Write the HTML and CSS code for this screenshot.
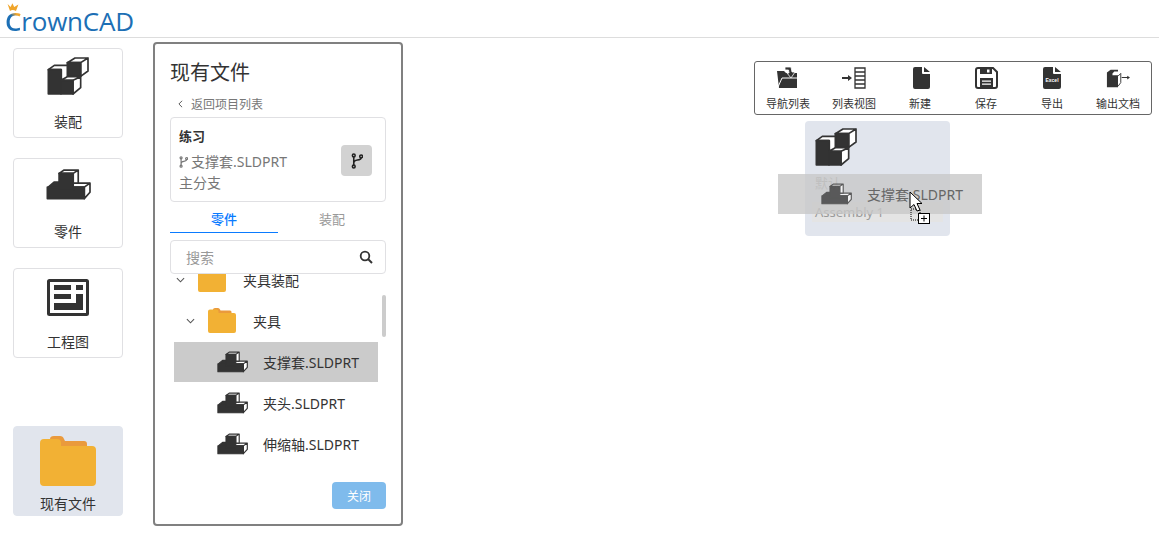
FILE: index.html
```html
<!DOCTYPE html>
<html lang="en">
<head>
  <meta charset="UTF-8">
  <meta name="viewport" content="width=device-width, initial-scale=1.0">
  <title>CrownCAD</title>
  <link rel="stylesheet" href="styles.css">
</head>

<body>
  <!-- shared icons -->
  <svg class="icon-defs" aria-hidden="true">
    <symbol id="icon-assembly" viewBox="144 170 126 114">
      <g stroke="#333" stroke-width="5" stroke-linejoin="round">
        <path fill="#fff" d="M205 187 228 173H267L245 187Z M245 187 267 173V212L245 228Z"/>
        <path fill="#333" d="M205 187H245V228H205Z"/>
        <path fill="#fff" d="M148 208 166 195H205V238H187V208Z"/>
        <path fill="#333" d="M148 208H186V281H148Z"/>
        <path fill="#fff" d="M186 240 205 229H245L222 240Z M222 240 245 229V262L222 281Z"/>
        <path fill="#333" d="M186 240H222V281H186Z"/>
      </g>
    </symbol>
    <symbol id="icon-part" viewBox="136 62 134 92">
      <g stroke="#333" stroke-width="5" stroke-linejoin="round">
        <path fill="#fff" d="M213 104H267L250 116H213Z M250 116 267 104V131L250 150Z"/>
        <path fill="#333" d="M140 118 160 101H180V118Z M140 116H250V150H140Z"/>
        <path fill="#fff" d="M175 75 190 65H232L217 75Z M217 75 232 65V104H217Z"/>
        <path fill="#333" d="M175 75H217V125H175Z"/>
      </g>
    </symbol>
    <symbol id="icon-drawing" viewBox="0 0 42 37">
      <rect x="1.500" y="1.500" width="39" height="34" rx="1" fill="#fff" stroke="#333" stroke-width="3"/>
      <path fill="#333" d="M7 6H24V11H7Z M29 6H36V11H29Z M7 15H24V20H7Z M29 15H36V31H7V24H29Z"/>
    </symbol>
    <symbol id="icon-folder" viewBox="0 0 56 50">
      <path fill="#ea9a3c" d="M10 3Q10 0 14 0H20Q23 0 24 3L25 5H44Q47 5 47 8V12H10Z"/>
      <path fill="#f2b134" d="M0 7Q0 3 4 3H17Q21 3 21 7V10H52Q56 10 56 14V46Q56 50 52 50H4Q0 50 0 46Z"/>
    </symbol>
    <symbol id="icon-branch" viewBox="0 0 13 17">
      <g fill="none" stroke="currentColor" stroke-width="1.700">
        <circle cx="3" cy="2.500" r="1.500"/>
        <circle cx="3" cy="14.500" r="1.500"/>
        <circle cx="11" cy="3.500" r="1.500"/>
        <path d="M3 4V13 M3 11Q3 8 7 7.500T11 5"/>
      </g>
    </symbol>
    <symbol id="icon-chevron" viewBox="0 0 10 6">
      <path d="M1 1 5 5 9 1" fill="none" stroke="#555" stroke-width="1.200"/>
    </symbol>
  </svg>

  <header class="topbar">
    <div class="logo">
      <svg class="logo-crown" viewBox="0 0 20 14">
        <path fill="#f0a52b" d="M1 1 6 6 9 0 12 6 19 2 15 13Q9 9 5 13Z"/>
      </svg>
      <span class="logo-c">C</span>rownCAD
    </div>
  </header>

  <main class="main">
    <aside class="sidebar">
      <button class="side-card">
        <svg class="side-icon-assembly"><use href="#icon-assembly"/></svg>
        <span>装配</span>
      </button>
      <button class="side-card">
        <svg class="side-icon-part"><use href="#icon-part"/></svg>
        <span>零件</span>
      </button>
      <button class="side-card">
        <svg class="side-icon-drawing"><use href="#icon-drawing"/></svg>
        <span>工程图</span>
      </button>
      <button class="side-card side-card-active">
        <svg class="side-icon-folder"><use href="#icon-folder"/></svg>
        <span>现有文件</span>
      </button>
    </aside>

    <section class="panel">
      <h2 class="panel-title">现有文件</h2>
      <a class="back-link">
        <svg class="back-chevron" viewBox="0 0 6 10"><path d="M5 1 1 5 5 9" fill="none" stroke="#555" stroke-width="1.200"/></svg>
        返回项目列表
      </a>

      <div class="project-card">
        <div class="project-info">
          <strong>练习</strong>
          <div class="project-file">
            <svg class="project-branch"><use href="#icon-branch"/></svg>
            支撑套.SLDPRT
          </div>
          <div>主分支</div>
        </div>
        <button class="branch-btn"><svg><use href="#icon-branch"/></svg></button>
      </div>

      <div class="tabs">
        <div class="tab tab-active">零件</div>
        <div class="tab">装配</div>
      </div>

      <div class="search">
        <span>搜索</span>
        <svg class="search-icon" viewBox="0 0 14 14">
          <circle cx="6" cy="6" r="4.300" fill="none" stroke="#333" stroke-width="1.800"/>
          <path d="M9 9 13 13" stroke="#333" stroke-width="2"/>
        </svg>
      </div>

      <div class="tree">
        <div class="tree-scroll">
          <div class="tree-row depth-0">
            <svg class="tree-chevron"><use href="#icon-chevron"/></svg>
            <svg class="tree-folder"><use href="#icon-folder"/></svg>
            <span>夹具装配</span>
          </div>
          <div class="tree-row depth-1">
            <svg class="tree-chevron"><use href="#icon-chevron"/></svg>
            <svg class="tree-folder"><use href="#icon-folder"/></svg>
            <span>夹具</span>
          </div>
          <div class="tree-row depth-2 tree-row-selected">
            <svg class="tree-part"><use href="#icon-part"/></svg>
            <span>支撑套.SLDPRT</span>
          </div>
          <div class="tree-row depth-2">
            <svg class="tree-part"><use href="#icon-part"/></svg>
            <span>夹头.SLDPRT</span>
          </div>
          <div class="tree-row depth-2">
            <svg class="tree-part"><use href="#icon-part"/></svg>
            <span>伸缩轴.SLDPRT</span>
          </div>
        </div>
        <div class="scrollbar"></div>
      </div>

      <div class="panel-footer">
        <button class="close-btn">关闭</button>
      </div>
    </section>

    <section class="workspace">
      <nav class="toolbar">
        <div class="tool">
          <svg viewBox="0 0 24 22">
            <path fill="#333" d="M1 4H8L10 6H21V21H3Z"/>
            <path fill="none" stroke="#fff" d="M2 20 6 11H23"/>
            <path fill="#333" stroke="#fff" stroke-width="0.800" d="M9 0H15L16 5H19L15 11 11 6H13L12.500 3H9Z"/>
          </svg>
          <span>导航列表</span>
        </div>
        <div class="tool">
          <svg viewBox="0 0 24 22">
            <path fill="#333" d="M0 10H6V8L10 11 6 14V12H0Z"/>
            <path fill="none" stroke="#333" stroke-width="1.300" d="M13 1H23V21H13Z M13 5H23 M13 9H23 M13 13H23 M13 17H23"/>
          </svg>
          <span>列表视图</span>
        </div>
        <div class="tool">
          <svg viewBox="0 0 24 22">
            <path fill="#333" d="M5 2Q5 0 7 0H14L14 6Q14 7 15 7H22V20Q22 22 20 22H7Q5 22 5 20Z M16 0 22 5H16Z"/>
          </svg>
          <span>新建</span>
        </div>
        <div class="tool">
          <svg viewBox="0 0 24 22">
            <path fill="none" stroke="#333" stroke-width="2" d="M4 1H19L23 5V19Q23 21 21 21H4Q2 21 2 19V3Q2 1 4 1Z"/>
            <path fill="#333" d="M6 1H18V7H6Z"/>
            <path fill="#fff" d="M13 2.500H15.500V5.500H13Z"/>
            <path fill="#333" d="M6 11H19V21H6Z"/>
            <path fill="#fff" d="M8 13.500H17V14.700H8Z M8 16.500H17V17.700H8Z"/>
          </svg>
          <span>保存</span>
        </div>
        <div class="tool">
          <svg viewBox="0 0 24 22">
            <path fill="#333" d="M3 2Q3 0 5 0H13L13 6Q13 7 14 7H21V20Q21 22 19 22H5Q3 22 3 20Z M15 0 21 5H15Z"/>
            <text class="excel-text" x="12" y="15" text-anchor="middle">Excel</text>
          </svg>
          <span>导出</span>
        </div>
        <div class="tool">
          <svg viewBox="0 0 26 22">
            <path fill="#333" d="M1 5 5 2H13L13 4H9L7 6V21H1Z M7 8H13V21H7Z"/>
            <path fill="none" stroke="#333" d="M13 9 16 6V16L13 20"/>
            <path fill="#333" d="M17 10H23V8.500L26 10.500 23 12.500V11H17Z"/>
          </svg>
          <span>输出文档</span>
        </div>
      </nav>

      <div class="asm-card">
        <svg class="asm-icon"><use href="#icon-assembly"/></svg>
        <div class="asm-name">默认</div>
        <div class="asm-label">Assembly 1</div>

        <div class="drag-ghost">
          <svg class="ghost-icon"><use href="#icon-part"/></svg>
          <span>支撑套.SLDPRT</span>
        </div>

        <svg class="drag-cursor" viewBox="0 0 22 34">
          <path d="M2 18H11V29H2Z" fill="none" stroke="#000" stroke-dasharray="1 1"/>
          <path d="M1 1V17L5 13.500 8 20 11 19 8 12.500H13Z" fill="#fff" stroke="#000"/>
          <rect x="9.500" y="22.500" width="11" height="10" fill="#fff" stroke="#000"/>
          <path d="M15 24.500V30.500 M12 27.500H18" stroke="#000"/>
        </svg>
      </div>
    </section>
  </main>
</body>
</html>
```

FILE: styles.css
```css
/* Base styles */
* {
  box-sizing: border-box;
}

body {
  margin: 0;
  height: 534px;
  overflow: hidden;
  background: white;
  color: #333;
  font-family: "Noto Sans", "Noto Sans CJK SC", sans-serif;
  font-size: 14px;
}

button {
  font-family: inherit;
}

.icon-defs {
  position: absolute;
  width: 0;
  height: 0;
}

/* Header */
.topbar {
  height: 38px;
  border-bottom: 1px solid #ddd;
  padding: 0 0 0 5px;
}

.logo {
  position: relative;
  width: 135px;
  color: #1c6fb5;
  font-family: "Open Sans", sans-serif;
  font-size: 26px;
  line-height: 43px;
  letter-spacing: -0.2px;
}

.logo-c {
  background: linear-gradient(50deg, #1c6fb5 55%, #f0a52b 70%);
  -webkit-background-clip: text;
  background-clip: text;
  color: transparent;
  font-weight: 600;
}

.logo-crown {
  position: absolute;
  left: 2px;
  top: 3px;
  width: 12px;
  height: 9px;
}

/* Page layout */
.main {
  display: flex;
  padding-top: 4px;
}

.sidebar {
  display: flex;
  flex-direction: column;
  gap: 20px;
  width: 110px;
  margin: 6px 30px 0 13px;
}

.side-card {
  display: flex;
  flex-direction: column;
  align-items: center;
  width: 110px;
  height: 90px;
  padding: 0;
  border: 1px solid #e0e0e3;
  border-radius: 4px;
  background: white;
  color: #333;
  font-size: 14px;
  line-height: 20px;
}

.side-card svg {
  flex: none;
}

.side-card span {
  margin-top: auto;
  margin-bottom: 5px;
}

.side-card-active {
  margin-top: 48px;
  background: #e1e5ed;
  border-color: #e1e5ed;
}

.side-card-active span {
  margin-bottom: 1px;
}

.side-icon-assembly {
  width: 42px;
  height: 38px;
  margin-top: 8px;
}

.side-icon-part {
  width: 45px;
  height: 31px;
  margin-top: 10px;
}

.side-icon-drawing {
  width: 42px;
  height: 37px;
  margin-top: 10px;
}

.side-icon-folder {
  width: 56px;
  height: 50px;
  margin-top: 9px;
}

/* Existing files panel */
.panel {
  display: flex;
  flex-direction: column;
  flex: none;
  width: 250px;
  height: 484px;
  padding: 0 15px;
  border: 2px solid #808080;
  border-radius: 4px;
  background: white;
}

.panel-title {
  margin: 14px 0 0;
  font-size: 20px;
  font-weight: 400;
  line-height: 30px;
}

.back-link {
  display: flex;
  align-items: center;
  height: 20px;
  margin-top: 6px;
  padding-left: 8px;
  color: #777;
  font-size: 12px;
}

.back-chevron {
  width: 5px;
  height: 8px;
  margin-right: 8px;
}

.project-card {
  display: flex;
  align-items: center;
  justify-content: space-between;
  height: 85px;
  margin-top: 3px;
  padding: 0 13px 0 8px;
  border: 1px solid #e0e0e3;
  border-radius: 4px;
}

.project-info {
  color: #777;
  line-height: 23px;
}

.project-info strong {
  display: block;
  color: #333;
  font-size: 13px;
}

.project-file {
  display: flex;
  align-items: center;
  margin: 2px 0 -2px;
}

.project-branch {
  width: 9px;
  height: 12px;
  margin-right: 3px;
  color: #777;
}

.branch-btn {
  display: flex;
  align-items: center;
  justify-content: center;
  width: 31px;
  height: 31px;
  margin-top: 2px;
  padding: 0;
  border: 0;
  border-radius: 4px;
  background: #d2d2d2;
  color: #222;
}

.branch-btn svg {
  width: 12px;
  height: 16px;
}

.tabs {
  display: flex;
  height: 31px;
  font-size: 13px;
}

.tab {
  width: 108px;
  line-height: 34px;
  text-align: center;
  color: #999;
}

.tab-active {
  border-bottom: 1px solid #0a7bff;
  color: #0a7bff;
  font-weight: 500;
}

.search {
  display: flex;
  align-items: center;
  justify-content: space-between;
  height: 34px;
  margin-top: 7px;
  padding: 0 12px 0 15px;
  border: 1px solid #e0e0e3;
  border-radius: 4px;
  color: #999;
}

.search-icon {
  width: 14px;
  height: 14px;
}

/* File tree */
.tree {
  position: relative;
  height: 197px;
  margin: 0 -15px;
  overflow: hidden;
}

.tree-scroll {
  margin-top: -15px;
}

.tree-row {
  display: flex;
  align-items: center;
  height: 41px;
}

.depth-0 {
  padding-left: 21px;
}

.depth-1 {
  padding-left: 31px;
}

.depth-2 {
  margin: 0 23px 0 19px;
  padding-left: 43px;
}

.tree-row-selected {
  height: 40px;
  margin-top: 1px;
  background: #cbcbcb;
}

.tree-chevron {
  width: 9px;
  height: 6px;
  margin-right: 13px;
}

.tree-folder {
  width: 28px;
  height: 25px;
  margin-right: 17px;
}

.tree-part {
  width: 31px;
  height: 22px;
  margin-right: 15px;
}

.scrollbar {
  position: absolute;
  top: 21px;
  left: 227px;
  width: 4px;
  height: 42px;
  border-radius: 2px;
  background: #ccc;
}

.panel-footer {
  display: flex;
  justify-content: flex-end;
  margin-top: 11px;
}

.close-btn {
  width: 54px;
  height: 27px;
  padding: 0;
  border: 0;
  border-radius: 4px;
  background: #7fbbec;
  color: white;
  font-size: 12px;
}

/* Workspace */
.workspace {
  display: flex;
  flex-direction: column;
  flex: 1;
  align-items: flex-end;
  padding-top: 19px;
}

.toolbar {
  display: grid;
  grid-template-columns: repeat(6, 1fr);
  width: 398px;
  height: 54px;
  margin-right: 7px;
  border: 1px solid #666;
  border-radius: 3px;
}

.tool {
  display: flex;
  flex-direction: column;
  align-items: center;
  font-size: 11px;
  line-height: 14px;
}

.tool svg {
  width: 24px;
  height: 22px;
  margin: 5px 0 8px;
}

.excel-text {
  fill: white;
  font-family: "Liberation Sans", sans-serif;
  font-size: 5px;
  font-weight: 700;
}

.asm-card {
  position: relative;
  width: 145px;
  height: 115px;
  margin: 6px 209px 0 0;
  padding: 7px 10px;
  border-radius: 4px;
  background: #e1e5ed;
  color: #999;
}

.asm-icon {
  display: block;
  width: 42px;
  height: 38px;
}

.asm-name {
  margin-top: 8px;
  font-size: 13px;
  line-height: 18px;
}

.asm-label {
  margin: 10px -3px 0;
  padding-left: 3px;
  background: #e4e4e4;
  font-size: 13px;
  line-height: 20px;
}

.drag-ghost {
  position: absolute;
  top: 53px;
  left: -27px;
  display: flex;
  align-items: center;
  width: 204px;
  height: 40px;
  padding-left: 43px;
  background: rgba(200, 200, 200, 0.8);
  color: #666;
}

.ghost-icon {
  width: 31px;
  height: 22px;
  margin-right: 15px;
  opacity: 0.75;
}

.drag-cursor {
  position: absolute;
  top: 70px;
  left: 104px;
  width: 22px;
  height: 34px;
}
```
